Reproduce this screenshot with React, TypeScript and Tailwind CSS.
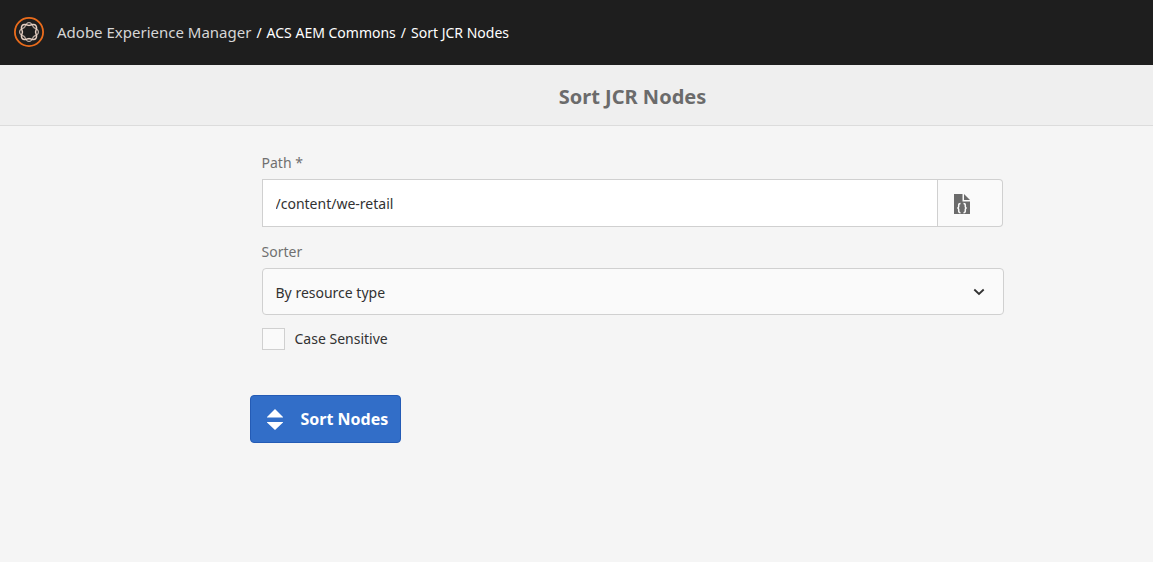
import { useState } from 'react';

function strand(radius: number, amplitude: number) {
  const points = Array.from({ length: 96 }, (_, i) => {
    const angle = (i / 96) * Math.PI * 2;
    const r = radius + amplitude * Math.cos(4 * angle);
    return `${(16 + r * Math.cos(angle)).toFixed(2)} ${(16 + r * Math.sin(angle)).toFixed(2)}`;
  });
  return `M${points.join('L')}Z`;
}

function ExperienceManagerLogo() {
  return (
    <svg viewBox="0 0 32 32" className="size-8 shrink-0" fill="none" aria-hidden="true">
      <circle cx="16" cy="16" r="14.1" stroke="#ea6c1c" strokeWidth="1.8" />
      <path d={strand(8, 1.4)} stroke="#b5a69d" strokeWidth="1.3" />
      <path d={strand(8, -1.4)} stroke="#e6cfc2" strokeWidth="1.5" />
    </svg>
  );
}

function CodeFileIcon() {
  return (
    <svg viewBox="0 0 16 20" className="h-5 w-4" aria-hidden="true">
      <path d="M0 0H8.500V7.500H16V20H0Z" fill="#6b6b6b" />
      <path d="M10 0V6H16Z" fill="#6b6b6b" />
      <path
        d="M6.500 9.500Q4.700 9.500 4.700 11.200V12.800Q4.700 14 3.300 14Q4.700 14 4.700 15.200V17Q4.700 18.700 6.500 18.700M9.500 9.500Q11.300 9.500 11.300 11.200V12.800Q11.300 14 12.700 14Q11.300 14 11.300 15.200V17Q11.300 18.700 9.500 18.700"
        fill="none"
        stroke="#fafafa"
        strokeWidth="1.5"
      />
    </svg>
  );
}

export default function App() {
  const [path, setPath] = useState('/content/we-retail');
  const [sorter, setSorter] = useState('type');
  const [caseSensitive, setCaseSensitive] = useState(false);

  return (
    <div className="min-h-screen bg-[#f5f5f5] font-['Noto_Sans',sans-serif] text-sm text-[#323232]">
      <header className="flex h-[65px] items-center gap-3 bg-[#1e1e1e] px-[13px] pb-0.5 text-white">
        <ExperienceManagerLogo />
        <nav aria-label="Breadcrumb" className="flex items-baseline gap-[5px] whitespace-nowrap pt-0.5">
          <a href="#home" className="text-[15px] text-[#d6d6d6]">Adobe Experience Manager</a>
          <span>/</span>
          <a href="#commons">ACS AEM Commons</a>
          <span>/</span>
          <a href="#sort">Sort JCR Nodes</a>
        </nav>
      </header>

      <div className="flex h-[61px] items-center justify-center border-b border-[#dcdcdc] bg-[#efefef] pl-28 pt-1">
        <h1 className="text-xl font-bold text-[#6b6b6b]">Sort JCR Nodes</h1>
      </div>

      <main className="pl-28">
        <form className="mx-auto w-full max-w-[742px] pt-[27px]" onSubmit={(e) => e.preventDefault()}>
          <label htmlFor="path" className="block leading-5 text-[#707070]">Path *</label>
          <div className="mr-px mt-1.5 flex h-12">
            <input
              id="path"
              type="text"
              required
              value={path}
              onChange={(e) => setPath(e.target.value)}
              className="min-w-0 flex-1 border border-[#d0d0d0] bg-white px-[13px] pt-0.5 outline-none"
            />
            <button
              type="button"
              aria-label="Browse paths"
              className="flex w-[65px] items-center rounded-r border border-l-0 border-[#d0d0d0] bg-[#fafafa] pl-4 pt-0.5"
            >
              <CodeFileIcon />
            </button>
          </div>

          <label htmlFor="sorter" className="mt-[15px] block leading-5 text-[#707070]">Sorter</label>
          <div className="mt-1.5 grid items-center">
            <select
              id="sorter"
              value={sorter}
              onChange={(e) => setSorter(e.target.value)}
              className="col-start-1 row-start-1 h-[47px] w-full appearance-none rounded border border-[#d0d0d0] bg-[#fafafa] px-[13px] pt-0.5 outline-none"
            >
              <option value="type">By resource type</option>
              <option value="name">By node name</option>
            </select>
            <svg
              viewBox="0 0 12 8"
              className="pointer-events-none col-start-1 row-start-1 mr-[19px] h-2 w-3 justify-self-end"
              fill="none"
              stroke="#323232"
              strokeWidth="1.8"
              aria-hidden="true"
            >
              <path d="M1.300 1.500L6 6L10.700 1.500" />
            </svg>
          </div>

          <div className="mt-[13px] flex items-center gap-2.5">
            <input
              id="case"
              type="checkbox"
              checked={caseSensitive}
              onChange={(e) => setCaseSensitive(e.target.checked)}
              className="h-[22px] w-[23px] appearance-none border border-[#d0d0d0] bg-[#fafafa] checked:bg-[#326ec8]"
            />
            <label htmlFor="case">Case Sensitive</label>
          </div>

          <button
            type="submit"
            className="-ml-3 mt-[45px] flex h-12 items-center gap-[18px] rounded border border-[#245bb5] bg-[#326ec8] pl-4 pr-3 text-base font-bold text-white"
          >
            <svg viewBox="0 0 16 22" className="h-[22px] w-4" fill="currentColor" aria-hidden="true">
              <path d="M8 1L16 9V9.500H0V9ZM0 14H16V14.500L8 22L0 14.500Z" />
            </svg>
            <span>Sort Nodes</span>
          </button>
        </form>
      </main>
    </div>
  );
}
